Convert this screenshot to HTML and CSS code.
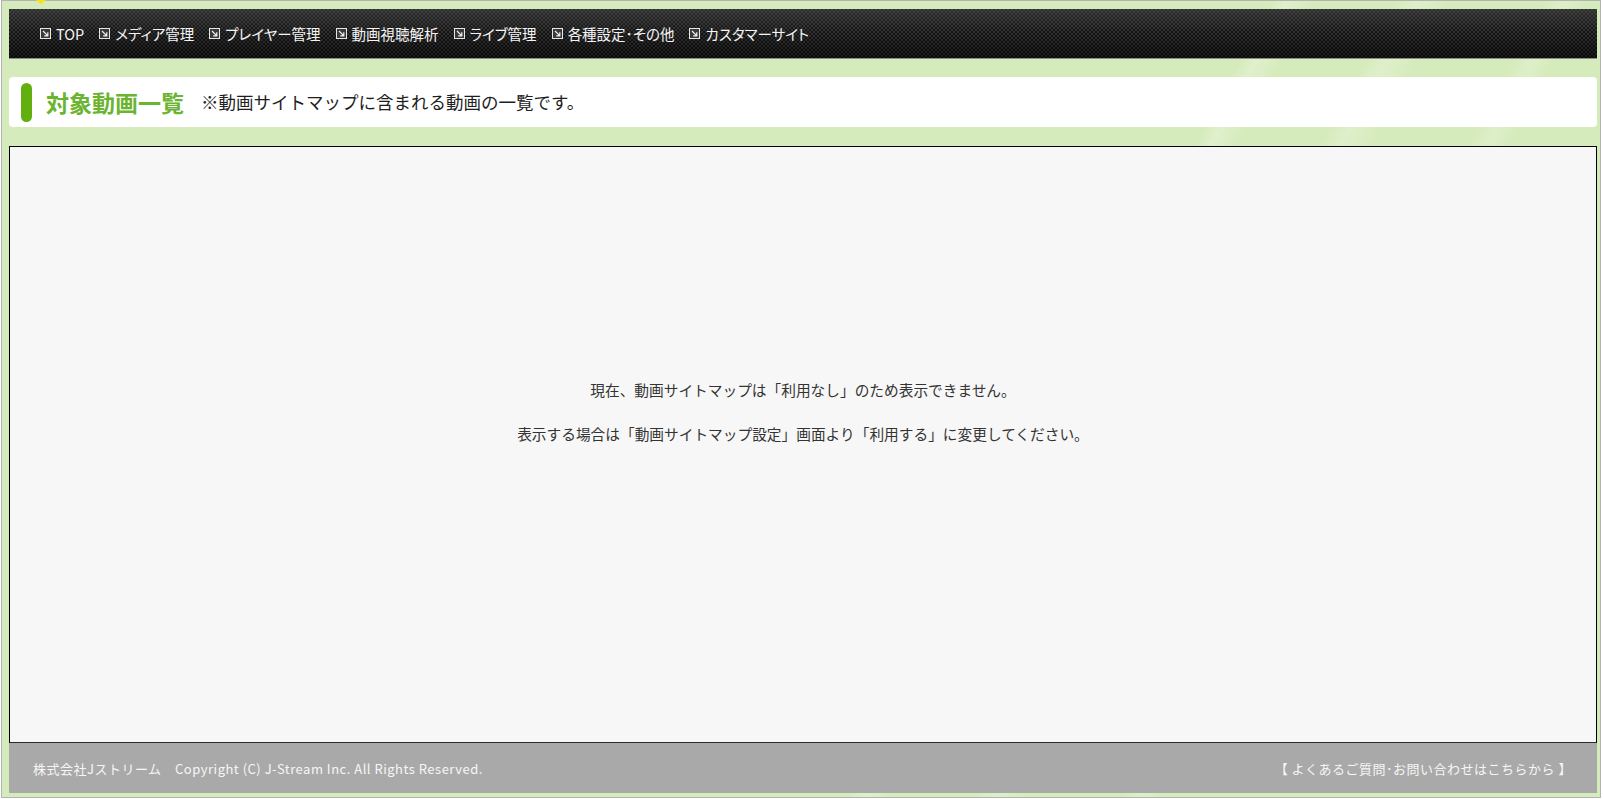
FILE: index.html
```html
<!DOCTYPE html>
<html lang="ja">
<head>
<meta charset="utf-8">
<title>対象動画一覧</title>
<link rel="stylesheet" href="styles.css">
</head>
<body>
<div class="frame">
  <span class="mark"></span>
  <nav class="nav">
    <a class="nav-item"><svg class="ico" viewBox="0 0 11 11"><rect x="0.5" y="0.5" width="10" height="10" fill="#3a3a3a" stroke="#e6e6e6"/><path d="M3 3 L7.6 7.6 M4.2 7.8 H7.8 V4.2" stroke="#f2f2f2" stroke-width="1.2" fill="none"/></svg>TOP</a>
    <a class="nav-item"><svg class="ico" viewBox="0 0 11 11"><rect x="0.5" y="0.5" width="10" height="10" fill="#3a3a3a" stroke="#e6e6e6"/><path d="M3 3 L7.6 7.6 M4.2 7.8 H7.8 V4.2" stroke="#f2f2f2" stroke-width="1.2" fill="none"/></svg>メディア管理</a>
    <a class="nav-item"><svg class="ico" viewBox="0 0 11 11"><rect x="0.5" y="0.5" width="10" height="10" fill="#3a3a3a" stroke="#e6e6e6"/><path d="M3 3 L7.6 7.6 M4.2 7.8 H7.8 V4.2" stroke="#f2f2f2" stroke-width="1.2" fill="none"/></svg>プレイヤー管理</a>
    <a class="nav-item"><svg class="ico" viewBox="0 0 11 11"><rect x="0.5" y="0.5" width="10" height="10" fill="#3a3a3a" stroke="#e6e6e6"/><path d="M3 3 L7.6 7.6 M4.2 7.8 H7.8 V4.2" stroke="#f2f2f2" stroke-width="1.2" fill="none"/></svg>動画視聴解析</a>
    <a class="nav-item"><svg class="ico" viewBox="0 0 11 11"><rect x="0.5" y="0.5" width="10" height="10" fill="#3a3a3a" stroke="#e6e6e6"/><path d="M3 3 L7.6 7.6 M4.2 7.8 H7.8 V4.2" stroke="#f2f2f2" stroke-width="1.2" fill="none"/></svg>ライブ管理</a>
    <a class="nav-item"><svg class="ico" viewBox="0 0 11 11"><rect x="0.5" y="0.5" width="10" height="10" fill="#3a3a3a" stroke="#e6e6e6"/><path d="M3 3 L7.6 7.6 M4.2 7.8 H7.8 V4.2" stroke="#f2f2f2" stroke-width="1.2" fill="none"/></svg>各種設定･その他</a>
    <a class="nav-item"><svg class="ico" viewBox="0 0 11 11"><rect x="0.5" y="0.5" width="10" height="10" fill="#3a3a3a" stroke="#e6e6e6"/><path d="M3 3 L7.6 7.6 M4.2 7.8 H7.8 V4.2" stroke="#f2f2f2" stroke-width="1.2" fill="none"/></svg>カスタマーサイト</a>
  </nav>
  <header class="title-box">
    <span class="title-bar"></span>
    <h1 class="title">対象動画一覧</h1>
    <p class="subtitle">※動画サイトマップに含まれる動画の一覧です。</p>
  </header>
  <main class="content">
    <p class="msg">現在、動画サイトマップは「利用なし」のため表示できません。</p>
    <p class="msg">表示する場合は「動画サイトマップ設定」画面より「利用する」に変更してください。</p>
  </main>
  <footer class="footer">
    <span class="copy">株式会社Jストリーム　Copyright (C) J-Stream Inc. All Rights Reserved.</span>
    <a class="help">【 よくあるご質問･お問い合わせはこちらから 】</a>
  </footer>
</div>
</body>
</html>
```

FILE: styles.css
```css
html, body {
  margin: 0;
  padding: 0;
  background: #ffffff;
}

body {
  font-family: "Noto Sans CJK JP", "Noto Sans", sans-serif;
}

.frame {
  position: relative;
  margin-left: 1px;
  width: 1600px;
  height: 798px;
  box-sizing: border-box;
  border: 1px solid #b3b3b3;
  padding: 8px 3px 4px 7px;
  display: flex;
  flex-direction: column;
  background-color: #d5ebbb;
  background-image:
    linear-gradient(118deg, transparent 0, transparent 1120px, rgba(255,255,255,0.25) 1135px, transparent 1160px, transparent 1230px, rgba(255,255,255,0.22) 1250px, transparent 1280px, transparent 1360px, rgba(255,255,255,0.2) 1380px, transparent 1400px);
}

.mark {
  position: absolute;
  left: 34px;
  top: -1px;
  width: 0;
  height: 0;
  border-left: 5px solid transparent;
  border-right: 5px solid transparent;
  border-top: 4px solid #f4e31a;
}

.nav {
  height: 49px;
  border-bottom: 1px solid #8d8d8d;
  display: flex;
  align-items: center;
  padding-left: 31px;
  background-color: #111;
  background-image:
    linear-gradient(to bottom, rgba(70,70,70,0.55) 0%, rgba(20,20,20,0.2) 45%, rgba(0,0,0,0.55) 100%),
    repeating-conic-gradient(#3a3a3a 0 25%, #141414 0 50%);
  background-size: auto, 4px 4px;
  margin-bottom: 18px;
}

.nav-item {
  display: flex;
  align-items: center;
  color: #f4f4f4;
  font-size: 14.5px;
  font-feature-settings: "palt";
  margin-right: 15px;
  white-space: nowrap;
}

.ico {
  width: 11px;
  height: 11px;
  margin-right: 5px;
  flex: none;
}

.title-box {
  height: 50px;
  box-sizing: border-box;
  background: #ffffff;
  border-radius: 4px;
  display: flex;
  align-items: center;
  padding-left: 12px;
  margin-bottom: 19px;
}

.title-bar {
  width: 11px;
  height: 39px;
  border-radius: 6px;
  background: #62b00e;
  margin-right: 14px;
  flex: none;
}

.title {
  margin: 0;
  font-size: 23px;
  font-weight: bold;
  color: #6ab42f;
  line-height: 1;
}

.subtitle {
  margin: 0 0 0 17px;
  font-size: 17.5px;
  color: #1e1e1e;
  line-height: 1;
}

.content {
  height: 597px;
  box-sizing: border-box;
  border: 1px solid #000000;
  border-bottom-color: #2a2a2a;
  background: #f7f7f7;
  padding-top: 232px;
  text-align: center;
}

.msg {
  margin: 0 0 22px;
  font-size: 14.7px;
  line-height: 22px;
  color: #333333;
}

.footer {
  height: 50px;
  background: #a9a9a9;
  display: flex;
  align-items: center;
  justify-content: space-between;
  padding: 0 25px 0 24px;
  color: #f6f6f6;
  font-size: 13px;
  letter-spacing: 0.5px;
}

.copy {
  white-space: nowrap;
}

.help {
  white-space: nowrap;
}
```
